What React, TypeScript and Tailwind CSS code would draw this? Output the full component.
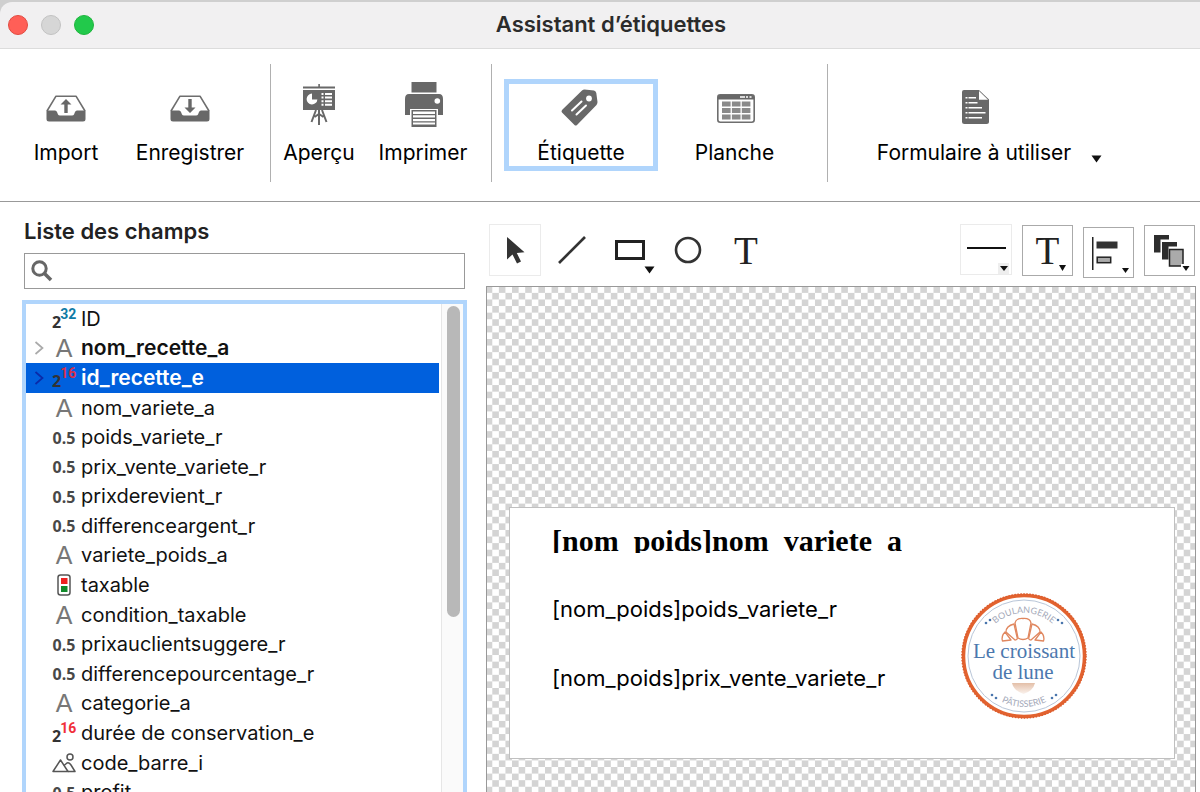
import React, { useState } from "react";

type FieldKind = "alpha" | "real" | "int16" | "int32" | "bool" | "picture";

interface Field {
  name: string;
  kind: FieldKind;
  indexed?: boolean;
}

const FIELDS: Field[] = [
  { name: "ID", kind: "int32" },
  { name: "nom_recette_a", kind: "alpha", indexed: true },
  { name: "id_recette_e", kind: "int16", indexed: true },
  { name: "nom_variete_a", kind: "alpha" },
  { name: "poids_variete_r", kind: "real" },
  { name: "prix_vente_variete_r", kind: "real" },
  { name: "prixderevient_r", kind: "real" },
  { name: "differenceargent_r", kind: "real" },
  { name: "variete_poids_a", kind: "alpha" },
  { name: "taxable", kind: "bool" },
  { name: "condition_taxable", kind: "alpha" },
  { name: "prixauclientsuggere_r", kind: "real" },
  { name: "differencepourcentage_r", kind: "real" },
  { name: "categorie_a", kind: "alpha" },
  { name: "durée de conservation_e", kind: "int16" },
  { name: "code_barre_i", kind: "picture" },
  { name: "profit", kind: "real" },
];

function Tray({ up }: { up: boolean }) {
  return (
    <svg width="40" height="27" viewBox="0 0 40 27" fill="none">
      <path d="M1 16 L10 1.2 H30 L39 16" stroke="#6e6e6e" strokeWidth="1.6" strokeLinejoin="round" />
      <path
        d="M0.5 15.5 H9 Q10.5 15.5 11 17 L12 19.5 Q12.5 20.5 14 20.5 H26 Q27.5 20.5 28 19.5 L29 17 Q29.5 15.5 31 15.5 H39.5 V24 Q39.5 26.5 37 26.5 H3 Q0.5 26.5 0.5 24 Z"
        fill="#686868"
      />
      {up ? (
        <path d="M20 4 L25.5 9.5 H21.7 V18 H18.3 V9.5 H14.5 Z" fill="#686868" />
      ) : (
        <path d="M20 18 L25.5 12.5 H21.7 V4 H18.3 V12.5 H14.5 Z" fill="#686868" />
      )}
    </svg>
  );
}

function Easel() {
  return (
    <svg width="32" height="48" viewBox="0 0 32 48">
      <path d="M15.3 0h1.6v4h-1.6z M0 2.6h32v1.8H0z M0 6h32v20H0z" fill="#686868" />
      <path d="M9 9.6 A5.4 5.4 0 1 0 14.4 15.4 H9 Z" fill="#fff" />
      <path d="M10.4 8.6 A5.4 5.4 0 0 1 15 13.8 H10.4 Z" fill="#686868" />
      <path d="M18.5 9h2v2h-2z M22 9h7v2h-7z M18.5 12.6h2v2h-2z M22 12.6h7v2h-7z M18.5 16.2h2v2h-2z M22 16.2h7v2h-7z M18.5 19.8h2v2h-2z M22 19.8h7v2h-7z" fill="#fff" />
      <path d="M16 26 V41 M13 26 L8.5 38 M19 26 L23.5 38 M11.5 33 L16 30 L20.5 33" stroke="#686868" strokeWidth="2" fill="none" />
    </svg>
  );
}

function Printer() {
  return (
    <svg width="38" height="52" viewBox="0 0 38 52" className="ml-px">
      <path d="M6.5 0h25v10.5h-25z" fill="#686868" />
      <path d="M4 12 H34 Q38 12 38 17 V33 H33 V27 H5 V33 H0 V17 Q0 12 4 12 Z" fill="#686868" />
      <circle cx="32.3" cy="19" r="2.8" fill="#fff" />
      <path d="M6.5 28h25v17h-25z" fill="#686868" />
      <path d="M8 29.5h22v2.4H8z M8 33.2h22v2.4H8z M8 36.9h22v2.4H8z M8 40.6h22v2H8z" fill="#fff" />
    </svg>
  );
}

function Tag() {
  return (
    <svg width="40" height="38" viewBox="0 0 40 38">
      <path d="M21 1.5 Q22 0.5 23.5 0.5 L33 1.5 Q35 2 35.3 4 L36.5 13 Q36.5 14.5 35.5 16 L16 36 Q14.5 37 13.5 36 L1 23.5 Q0 22.5 1 21 Z" fill="#686868" />
      <circle cx="28" cy="9.5" r="2.9" fill="#fff" />
      <path d="M11 21.5 L20.5 12.5 M15.5 25.5 L25 16.5" stroke="#fff" strokeWidth="2" strokeLinecap="round" />
    </svg>
  );
}

function Sheet() {
  return (
    <svg width="38" height="29" viewBox="0 0 38 29" className="ml-[3px]">
      <rect x="0.8" y="0.8" width="36.4" height="27.4" rx="2.5" fill="#fff" stroke="#6e6e6e" strokeWidth="1.6" />
      <path d="M1 3 Q1 1 3 1 H35 Q37 1 37 3 V5.5 H1 Z" fill="#686868" />
      <path d="M23 2.2h5v1.6h-5z M29 2.2h2v1.6h-2z M32.5 2.2h2v1.6h-2z" fill="#fff" />
      <path d="M5 7.5h8.6v5H5z M14.9 7.5h8.6v5h-8.6z M24.8 7.5h8.6v5h-8.6z M5 14h8.6v5H5z M14.9 14h8.6v5h-8.6z M24.8 14h8.6v5h-8.6z M5 20.5h8.6v5H5z M14.9 20.5h8.6v5h-8.6z M24.8 20.5h8.6v5h-8.6z" fill="#8a8a8a" />
    </svg>
  );
}

function Page() {
  return (
    <svg width="27" height="36" viewBox="0 0 27 36" className="ml-[3px]">
      <path d="M2 0 H17 L27 9.5 V31.5 Q27 34 24.5 34 H2.5 Q0 34 0 31.5 V2 Q0 0 2 0 Z" fill="#686868" />
      <path d="M17 1 V9.8 H26 Z" fill="#fff" />
      <path d="M3.5 7h2v1.6h-2z M6.5 7h7.5v1.6H6.5z M3.5 12h2v1.6h-2z M6.5 12h9v1.6h-9z M3.5 17h2v1.6h-2z M6.5 17h13.5v1.6H6.5z M3.5 22h2v1.6h-2z M6.5 22h17v1.6h-17z M3.5 27h2v1.6h-2z M6.5 27h13.5v1.6H6.5z" fill="#fff" />
    </svg>
  );
}

function Caret({ className }: { className: string }) {
  return (
    <svg width="11" height="8" viewBox="0 0 11 8" className={className}>
      <path d="M0.5 0.5h10L5.5 7.5z" fill="#111" />
    </svg>
  );
}

interface ToolbarButtonProps {
  label: string;
  icon: React.ReactNode;
  className: string;
}

function ToolbarButton({ label, icon, className }: ToolbarButtonProps) {
  return (
    <button type="button" className={`flex h-[92px] shrink-0 flex-col items-center ${className}`}>
      <span className="flex h-[48px] shrink-0 items-center justify-center">{icon}</span>
      <span className="mt-[9px] whitespace-nowrap text-[21px] leading-6">{label}</span>
    </button>
  );
}

function Separator() {
  return <div className="-mt-[15px] h-[118px] w-px shrink-0 bg-[#b0b0b0]" />;
}

function Power({ exp, className }: { exp: string; className: string }) {
  return (
    <span className="flex h-[22px] w-6 font-bold">
      <span className="self-end font-['Noto_Sans',sans-serif] text-[16px] leading-[15px] text-[#333]">2</span>
      <span className={`-ml-px font-['Roboto',sans-serif] text-[14px] leading-[12px] ${className}`}>{exp}</span>
    </span>
  );
}

function KindIcon({ kind, selected }: { kind: FieldKind; selected: boolean }) {
  switch (kind) {
    case "int32":
      return <Power exp="32" className="text-[#0f7ba6]" />;
    case "int16":
      return <Power exp="16" className={selected ? "text-[#d3304a]" : "text-[#f0303a]"} />;
    case "alpha":
      return <span className="font-['Liberation_Sans',sans-serif] text-[25px] font-normal leading-6 text-[#777]">A</span>;
    case "real":
      return <span className="pt-px font-['Noto_Sans',sans-serif] text-[16px] font-bold leading-5 text-[#484848]">0.5</span>;
    case "bool":
      return (
        <svg width="14" height="22" viewBox="0 0 14 22">
          <rect x="1" y="1" width="12" height="20" rx="2.5" fill="#fff" stroke="#555" strokeWidth="1.5" />
          <rect x="4" y="4" width="6.5" height="6" fill="#ee2222" />
          <rect x="4" y="12" width="6.5" height="6" fill="#118a2b" />
        </svg>
      );
    case "picture":
      return (
        <svg width="24" height="20" viewBox="0 0 24 20" fill="none" stroke="#555" strokeWidth="1.5">
          <path d="M1 18.5 L8.5 7 L16 18.5 Z" strokeLinejoin="round" />
          <path d="M12 12.5 L15 10 Q17 9 19 12 L23 18.5 H16" strokeLinejoin="round" />
          <circle cx="18" cy="4" r="3" />
        </svg>
      );
  }
}

function FieldList() {
  const [selected, setSelected] = useState("id_recette_e");
  return (
    <div className="-mx-[2px] mt-[11px] flex min-h-0 flex-1 overflow-hidden border-4 border-b-0 border-[#b0d5fc]">
      <ul className="grid h-[503px] flex-1 auto-rows-fr">
        {FIELDS.map((field) => {
          const active = field.name === selected;
          return (
            <li key={field.name} className={active ? "mr-[2px] bg-[#0060dd] text-white" : "mr-[2px] text-[#111]"}>
              <button
                type="button"
                onClick={() => setSelected(field.name)}
                className={`flex h-full w-full items-center text-left ${field.indexed ? "text-[21px] font-semibold" : "text-[20px]"}`}
              >
                <span className="flex w-[26px] shrink-0 justify-center">
                  {field.indexed && (
                    <svg width="10" height="14" viewBox="0 0 10 14" fill="none">
                      <path d="M1.5 1 L8.5 7 L1.5 13" stroke={active ? "#0a2aa8" : "#aaa"} strokeWidth="1.7" />
                    </svg>
                  )}
                </span>
                <span className="flex w-6 shrink-0 items-center justify-center">
                  <KindIcon kind={field.kind} selected={active} />
                </span>
                <span className="ml-[5px] whitespace-nowrap leading-6">{field.name}</span>
              </button>
            </li>
          );
        })}
      </ul>
      <div className="flex w-[22px] justify-center border-l border-[#e6e6e6] bg-[#fafafa] pl-px pt-[2px]">
        <div className="h-[311px] w-[13px] rounded-full bg-[#b8b8b8]" />
      </div>
    </div>
  );
}

function Logo() {
  return (
    <svg width="128" height="128" viewBox="0 0 128 128">
      <defs>
        <path id="arc-top" d="M21 64 A43 43 0 0 1 107 64" />
        <path id="arc-bottom" d="M13 64 A51 51 0 0 0 115 64" />
        <linearGradient id="shell" x1="0" y1="0" x2="0" y2="1">
          <stop offset="0" stopColor="#e3bfa8" />
          <stop offset="1" stopColor="#fbf3ee" />
        </linearGradient>
      </defs>
      <circle cx="64" cy="64" r="60.5" fill="#fff" stroke="#e2622f" strokeWidth="3.5" />
      <circle cx="64" cy="64" r="62" fill="none" stroke="#dc5c2c" strokeWidth="1.5" strokeDasharray="1.5 1.5" />
      <circle cx="64" cy="64" r="56" fill="none" stroke="#b9c6d8" strokeWidth="1" />
      <g fill="#a3a8b8" fontFamily="Lato, sans-serif" fontSize="9" textAnchor="middle">
        <text>
          <textPath href="#arc-top" startOffset="50%">BOULANGERIE</textPath>
        </text>
        <text>
          <textPath href="#arc-bottom" startOffset="50%">PÂTISSERIE</textPath>
        </text>
      </g>
      <g fill="#4a76ad">
        <circle cx="26" cy="31" r="1.3" />
        <circle cx="30" cy="28" r="1.3" />
        <circle cx="98" cy="28" r="1.3" />
        <circle cx="102" cy="31" r="1.3" />
        <circle cx="32" cy="103" r="1.3" />
        <circle cx="36" cy="106" r="1.3" />
        <circle cx="92" cy="106" r="1.3" />
        <circle cx="96" cy="103" r="1.3" />
      </g>
      <g fill="none" stroke="#e0875f" strokeWidth="1.3" strokeLinejoin="round">
        <path d="M58 46 L55 31 Q56 26 63 26.5 Q70 26 71 31 L68 46 Q63 49 58 46 Z" />
        <path d="M54 32 Q46 34 46 40 L55 48 Q58 48 57 45 Z" />
        <path d="M72 32 Q80 34 80 40 L71 48 Q68 48 69 45 Z" />
        <path d="M45 40 Q41 44 42.5 49 L51 48 Z" />
        <path d="M81 40 Q85 44 83.5 49 L75 48 Z" />
      </g>
      <g fill="#4c78ae" fontFamily="'Liberation Serif', serif" textAnchor="middle">
        <text x="64" y="66" fontSize="21">Le croissant</text>
        <text x="63" y="87" fontSize="21">de lune</text>
      </g>
      <path d="M52 91 H75 Q73 99 63.5 102 Q54 99 52 91 Z" fill="url(#shell)" />
    </svg>
  );
}

function LabelCanvas() {
  return (
    <div className="relative mt-[8px] min-h-0 flex-1 overflow-hidden border border-b-0 border-[#999]">
      <svg className="absolute inset-0 h-full w-full" aria-hidden="true">
        <defs>
          <pattern id="checks" width="13.17" height="13.17" patternUnits="userSpaceOnUse" patternTransform="translate(-1.3 -0.7)">
            <rect width="13.17" height="13.17" fill="#fff" />
            <rect width="6.585" height="6.585" fill="#d4d4d4" />
            <rect x="6.585" y="6.585" width="6.585" height="6.585" fill="#d4d4d4" />
          </pattern>
        </defs>
        <rect width="100%" height="100%" fill="url(#checks)" />
      </svg>
      <div className="absolute left-[22px] top-[220px] h-[252px] w-[666px] border border-[#c0c0c0] bg-white text-black">
        <div className="absolute left-[42px] top-[16px] h-[29px] overflow-hidden whitespace-nowrap font-['Liberation_Serif',serif] text-[30px] font-bold leading-[33px]">
          [nom_poids]nom_variete_a
        </div>
        <div className="absolute left-[42px] top-[89px] whitespace-nowrap text-[22px] leading-6">[nom_poids]poids_variete_r</div>
        <div className="absolute left-[42px] top-[158px] whitespace-nowrap text-[22px] leading-6">[nom_poids]prix_vente_variete_r</div>
        <div className="absolute left-[450px] top-[84px]">
          <Logo />
        </div>
      </div>
    </div>
  );
}

const TOOL = "relative flex size-[52px] shrink-0 items-center justify-center";
const MENU = "relative flex h-[51px] shrink-0 items-center justify-center border";

function DrawingTools() {
  return (
    <div className="flex h-[54px] shrink-0 items-start">
      <button type="button" aria-label="Sélection" className={`${TOOL} ml-[3px] border border-[#ebebeb]`}>
        <svg width="20" height="27" viewBox="0 0 20 27" className="ml-[2px]">
          <path d="M1 0 V22.5 L6.5 17.5 L11 26.5 L15 24.5 L10.8 16 L18.5 15.3 Z" fill="#333" />
        </svg>
      </button>
      <button type="button" aria-label="Ligne" className={`${TOOL} ml-[5px]`}>
        <svg width="28" height="28" viewBox="0 0 28 28">
          <path d="M1 27 L27 1" stroke="#333" strokeWidth="2.6" />
        </svg>
      </button>
      <button type="button" aria-label="Rectangle" className={`${TOOL} ml-[6px]`}>
        <svg width="30" height="20" viewBox="0 0 30 20">
          <rect x="1.5" y="1.5" width="27" height="17" fill="#fff" stroke="#222" strokeWidth="3" />
        </svg>
        <Caret className="absolute bottom-[2px] right-[1px]" />
      </button>
      <button type="button" aria-label="Ovale" className={`${TOOL} ml-[6px]`}>
        <svg width="28" height="28" viewBox="0 0 28 28">
          <circle cx="14" cy="14" r="12" fill="#fff" stroke="#333" strokeWidth="2.6" />
        </svg>
      </button>
      <button type="button" aria-label="Texte" className={`${TOOL} ml-[6px] font-['Liberation_Serif',serif] text-[39px] leading-none text-[#222]`}>
        T
      </button>
      <div className="ml-auto flex gap-[10px] pr-px">
        <button type="button" aria-label="Style de trait" className={`${MENU} w-[52px] border-[#ebebeb]`}>
          <svg width="39" height="2" viewBox="0 0 39 2" className="-mt-1">
            <path d="M0 0h39v2H0z" fill="#111" />
          </svg>
          <span className="absolute bottom-0 right-[2px] flex size-[11px] items-center justify-center bg-[#eee]">
            <svg width="8" height="5" viewBox="0 0 8 5">
              <path d="M0 0h8L4 5z" fill="#111" />
            </svg>
          </span>
        </button>
        <button type="button" aria-label="Police" className={`${MENU} mt-px w-[51px] border-[#aaa] font-['Liberation_Serif',serif] text-[39px] leading-none text-[#222]`}>
          T
          <svg width="7" height="6" viewBox="0 0 7 6" className="absolute bottom-1 right-[6px]">
            <path d="M0 0h7L3.5 6z" fill="#111" />
          </svg>
        </button>
        <button type="button" aria-label="Alignement" className={`${MENU} mt-[3px] w-[51px] border-[#aaa]`}>
          <svg width="51" height="51" viewBox="0 0 51 51" className="shrink-0">
            <path d="M9 10h1.5v33H9z" fill="#222" />
            <path d="M13.5 14.5h21v7h-21z" fill="#333" />
            <rect x="14.2" y="30.2" width="13.5" height="5.5" fill="#aaa" stroke="#222" strokeWidth="1.5" />
            <path d="M39 41h7l-3.5 5z" fill="#111" />
          </svg>
        </button>
        <button type="button" aria-label="Niveau" className={`${MENU} mt-px w-[51px] border-[#aaa]`}>
          <svg width="51" height="51" viewBox="0 0 51 51" className="shrink-0">
            <path d="M10 10h15v4.5h-8.5v13H10z" fill="#2d2d2d" />
            <path d="M18 17h15v4.5h-8.5v13H18z" fill="#2d2d2d" />
            <rect x="25.5" y="24.5" width="13.5" height="16.5" fill="#aaa" stroke="#222" strokeWidth="1.5" />
            <path d="M37 39h9v7h-9z" fill="#fff" />
            <path d="M38.5 41h7l-3.5 5z" fill="#111" />
          </svg>
        </button>
      </div>
    </div>
  );
}

export default function App() {
  return (
    <div className="flex h-screen flex-col overflow-hidden bg-[#cfcfcf] pt-[2px] font-['Inter',sans-serif] text-black">
      <header className="relative flex h-[47px] shrink-0 items-center justify-center rounded-tl-[12px] border-b border-[#dcdcdc] bg-[#f1f0f1] pl-[22px]">
        <div className="absolute left-2 flex gap-[13px]">
          <span className="size-5 rounded-full border border-[#e24b41] bg-[#ff5f57]" />
          <span className="size-5 rounded-full border border-[#c2c2c2] bg-[#d6d6d6]" />
          <span className="size-5 rounded-full border border-[#1fb53e] bg-[#22c94b]" />
        </div>
        <h1 className="-mt-[2px] text-[22px] font-semibold leading-7 text-[#2b2b2b]">Assistant d’étiquettes</h1>
      </header>

      <nav className="flex h-[153px] shrink-0 border-b border-[#999] bg-white pt-[30px]">
        <ToolbarButton label="Import" className="ml-[22px] w-[88px] pt-[5px]" icon={<Tray up />} />
        <ToolbarButton label="Enregistrer" className="ml-[14px] mr-[14px] w-[132px] pt-[5px]" icon={<Tray up={false} />} />
        <Separator />
        <ToolbarButton label="Aperçu" className="ml-1 w-[88px] pt-[5px]" icon={<Easel />} />
        <ToolbarButton label="Imprimer" className="ml-2 mr-4 w-[104px] pt-[5px]" icon={<Printer />} />
        <Separator />
        <ToolbarButton label="Étiquette" className="ml-3 w-[154px] border-[5px] border-[#b0d5fc]" icon={<Tag />} />
        <ToolbarButton label="Planche" className="mr-4 w-[153px] pt-[5px]" icon={<Sheet />} />
        <Separator />
        <div className="ml-[47px] flex">
          <ToolbarButton label="Formulaire à utiliser" className="w-[198px] pt-[5px]" icon={<Page />} />
          <Caret className="ml-[18px] mt-[76px]" />
        </div>
      </nav>

      <main className="flex min-h-0 flex-1 bg-white pr-1">
        <section className="flex w-[465px] shrink-0 flex-col pl-6 pt-[17px]">
          <h2 className="text-[22px] font-semibold leading-6 text-[#222]">
            <label htmlFor="field-search">Liste des champs</label>
          </h2>
          <div className="mt-[10px] flex h-9 shrink-0 items-center border border-[#999] pl-[6px]">
            <svg width="22" height="22" viewBox="0 0 22 22" fill="none" stroke="#666">
              <circle cx="8.5" cy="8.5" r="6.7" strokeWidth="3" />
              <path d="M13.5 13.5 L20 20" strokeWidth="3.6" />
            </svg>
            <input id="field-search" type="text" className="ml-2 h-full min-w-0 flex-1 text-[20px] outline-none" />
          </div>
          <FieldList />
        </section>
        <section className="ml-[21px] flex min-w-0 flex-1 flex-col pt-[22px]">
          <DrawingTools />
          <LabelCanvas />
        </section>
      </main>
    </div>
  );
}
